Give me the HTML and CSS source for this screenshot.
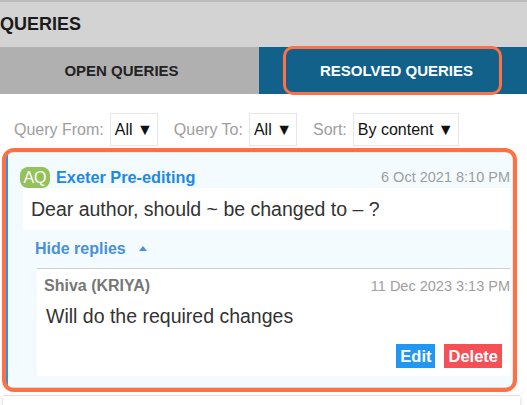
FILE: index.html
```html
<!DOCTYPE html>
<html lang="en">
<head>
  <meta charset="UTF-8">
  <meta name="viewport" content="width=device-width, initial-scale=1.0">
  <title>Queries</title>
  <link rel="stylesheet" href="styles.css">
</head>
<body>

<div class="panel-title">QUERIES</div>

<div class="tabs">
  <div class="tab">OPEN QUERIES</div>
  <div class="tab active">RESOLVED QUERIES<span class="mark tab-mark"></span></div>
</div>

<div class="filters">
  <span class="filter-label">Query From:</span>
  <span class="select">All &#9660;</span>
  <span class="filter-label">Query To:</span>
  <span class="select">All &#9660;</span>
  <span class="filter-label">Sort:</span>
  <span class="select">By content &#9660;</span>
</div>

<div class="list">
  <div class="query">
    <span class="mark card-mark"></span>
    <div class="query-head">
      <span class="badge">AQ</span>
      <span class="author">Exeter Pre-editing</span>
      <span class="date">6 Oct 2021 8:10 PM</span>
    </div>
    <div class="message">Dear author, should ~ be changed to – ?</div>
    <div class="toggle">Hide replies <span class="arrow"></span></div>
    <div class="reply">
      <div class="reply-head">
        <span class="reply-author">Shiva (KRIYA)</span>
        <span class="date">11 Dec 2023 3:13 PM</span>
      </div>
      <div class="reply-text">Will do the required changes</div>
      <div class="actions">
        <span class="btn btn-edit">Edit</span>
        <span class="btn btn-delete">Delete</span>
      </div>
    </div>
  </div>
  <div class="query next"></div>
</div>

</body>
</html>
```

FILE: styles.css
```css
body {
  margin: 0;
  font-family: "Liberation Sans", Arial, sans-serif;
  background-color: white;
  overflow: hidden;
}
.panel-title {
  height: 45px;
  border-top: 2px solid #bdbdbd;
  background-color: #d3d3d3;
  font-size: 18px;
  font-weight: bold;
  line-height: 44px;
  color: #1a1a1a;
}
.tabs {
  display: flex;
  height: 47px;
}
.tab {
  display: flex;
  align-items: center;
  justify-content: center;
  font-size: 15px;
  font-weight: bold;
  color: #222;
}
.tab:first-child {
  width: 259px;
  padding-right: 16px;
  box-sizing: border-box;
  background-color: #b0b0b0;
}
.tab.active {
  flex: 1;
  position: relative;
  padding-left: 7px;
  background-color: #12618a;
  color: white;
}
.mark {
  position: absolute;
  border: 3px solid #ff7043;
  border-radius: 10px;
  pointer-events: none;
}
.tab-mark {
  left: 24px;
  right: 25px;
  top: -1px;
  bottom: -1px;
}
.filters {
  display: flex;
  align-items: center;
  padding: 19px 0 6px 14px;
  font-size: 16px;
}
.filter-label {
  color: #9e9e9e;
  margin-right: 6px;
}
.select {
  display: inline-block;
  height: 31px;
  line-height: 31px;
  padding: 0 4px;
  border: 1px solid #e6e6e6;
  color: #111;
  margin-right: 16px;
}
.list {
  padding: 0 7px 0 3px;
}
.query {
  position: relative;
  margin: 0 8px 0 3px;
  padding: 0 2px 11px 0;
  background-color: #f3fbff;
  border-left: 2px solid #2196f3;
  border-top: 1px solid #e8e8e8;
  box-shadow: 0 2px 4px rgba(0, 0, 0, 0.2);
}
.card-mark {
  left: -6px;
  right: -5px;
  top: -5px;
  bottom: -5px;
  border-width: 4px;
  border-radius: 12px;
}
.query-head {
  display: flex;
  align-items: center;
  height: 22px;
  padding: 13px 0 0 12px;
}
.badge {
  width: 30px;
  height: 21px;
  line-height: 21px;
  text-align: center;
  border-radius: 8px;
  background-color: #93c15a;
  color: white;
  font-size: 16px;
  margin-right: 6px;
}
.author {
  color: #1e88e5;
  font-weight: bold;
  font-size: 16.3px;
}
.date {
  margin-left: auto;
  color: #9e9e9e;
  font-size: 14.5px;
}
.message {
  margin-left: 15px;
  padding: 10px 8px;
  line-height: 22px;
  background-color: white;
  font-size: 19.5px;
  color: #333;
}
.toggle {
  height: 38px;
  line-height: 38px;
  padding-left: 27px;
  color: #4a8fd9;
  font-weight: bold;
  font-size: 16px;
}
.arrow {
  display: inline-block;
  margin-left: 9px;
  border-left: 4px solid transparent;
  border-right: 4px solid transparent;
  border-bottom: 5px solid #4a8fd9;
  vertical-align: 3px;
}
.reply {
  margin-left: 29px;
  padding: 8px 0 8px 7px;
  border-top: 1px solid #cfcfcf;
  background-color: white;
}
.reply-head {
  display: flex;
  align-items: center;
  height: 18px;
}
.reply-author {
  color: #777;
  font-weight: bold;
  font-size: 16px;
}
.reply-text {
  padding: 9px 0 0 2px;
  line-height: 24px;
  font-size: 19.5px;
  color: #333;
}
.actions {
  display: flex;
  justify-content: flex-end;
  gap: 9px;
  padding: 16px 8px 0 0;
}
.btn {
  height: 24px;
  line-height: 24px;
  padding: 0 4px;
  color: white;
  font-weight: bold;
  font-size: 16.5px;
}
.btn-edit {
  background-color: #2196f3;
}
.btn-delete {
  background-color: #f55056;
}
.query.next {
  margin: 8px 0 0 0;
  height: 40px;
  background-color: white;
  border-left: none;
  border-top: 1px solid #e0e0e0;
}
```
